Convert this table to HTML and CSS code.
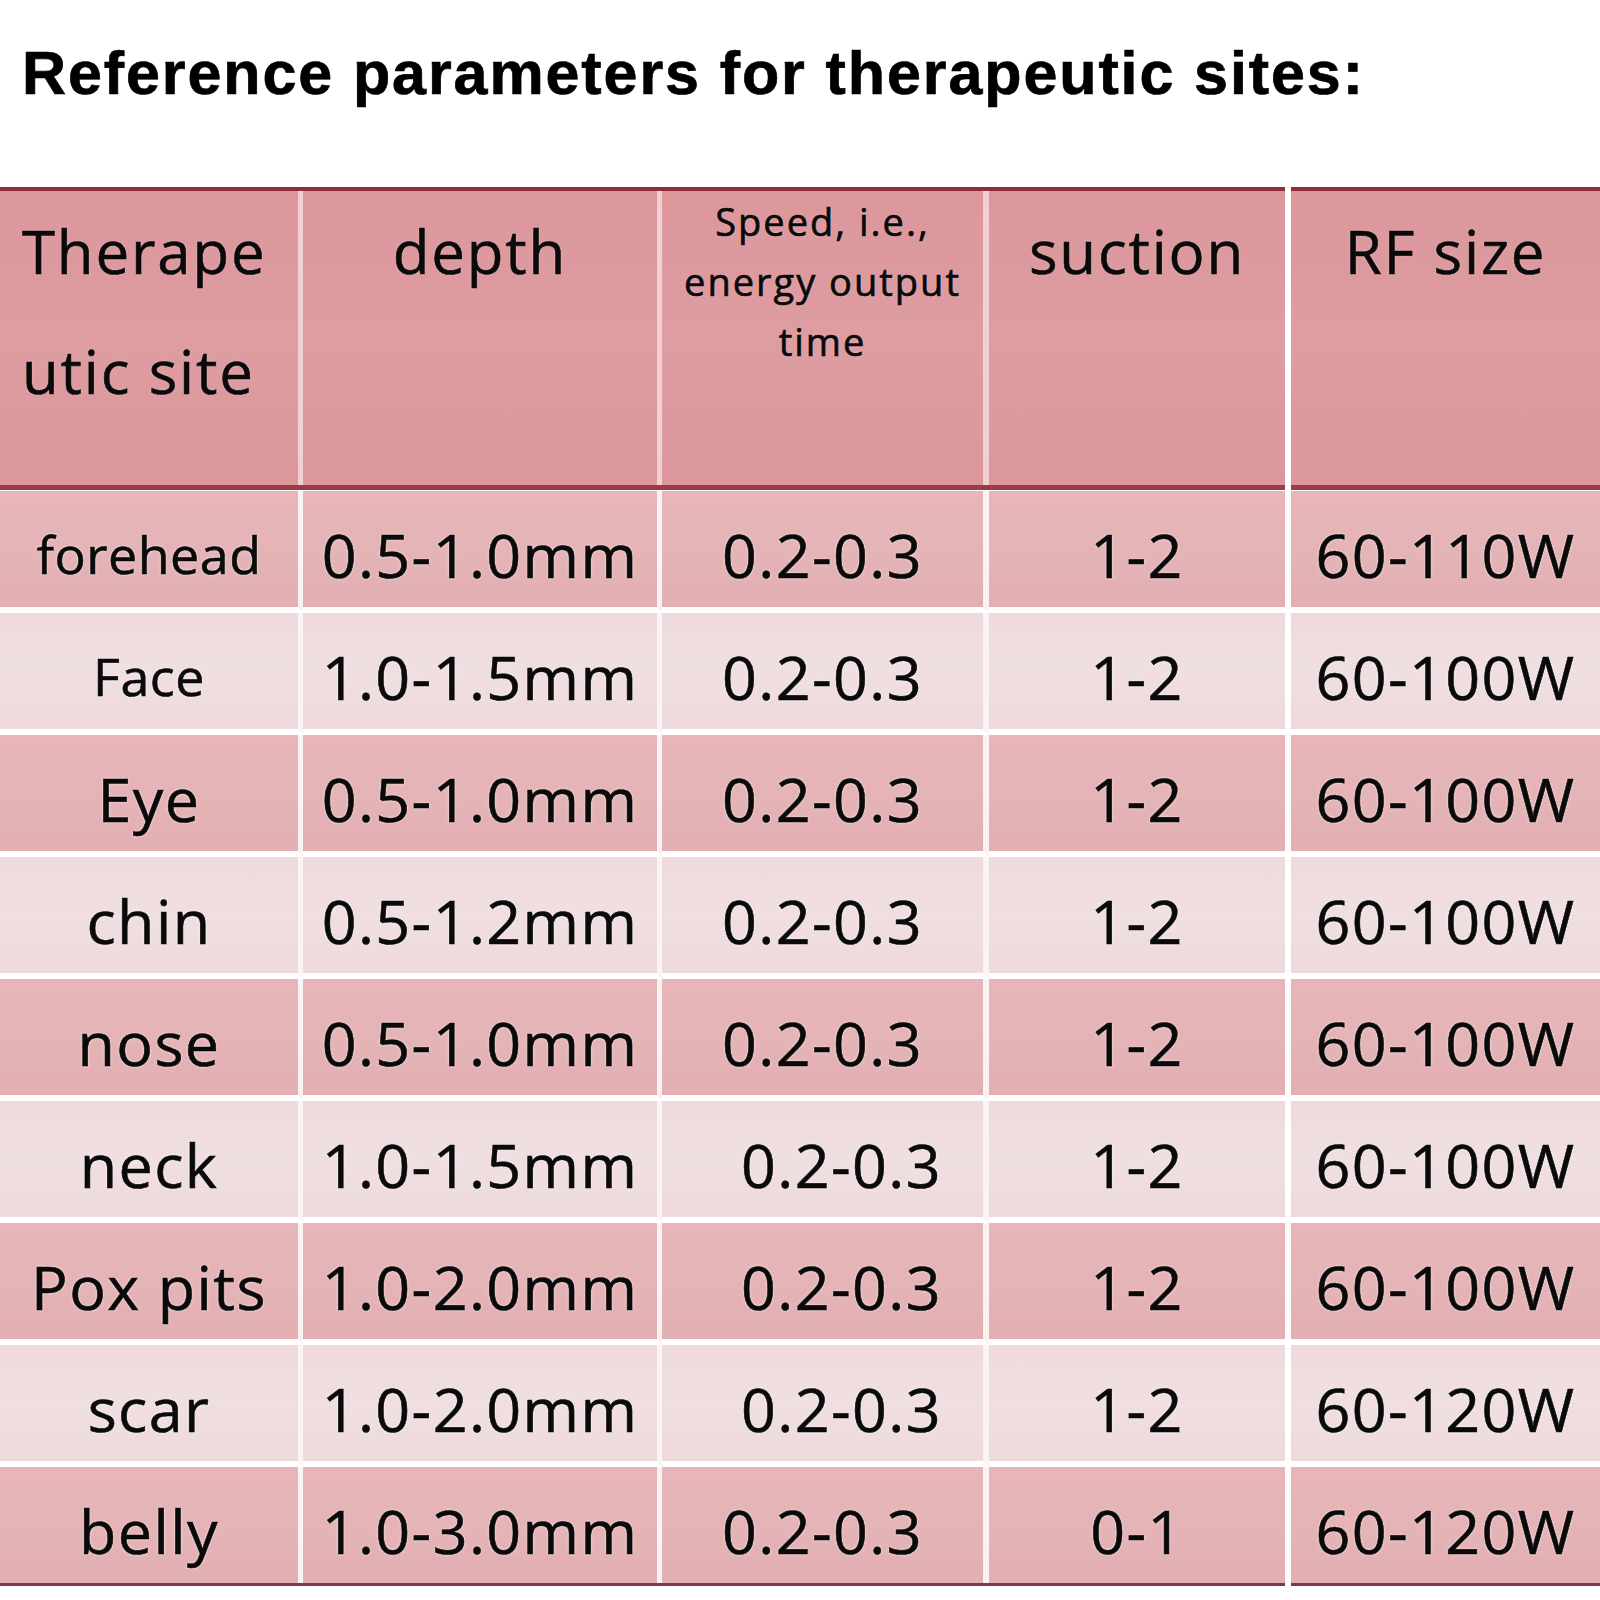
FILE: index.html
```html
<!DOCTYPE html>
<html lang="en">
<head>
<meta charset="utf-8">
<title>Reference parameters for therapeutic sites</title>
<link rel="stylesheet" href="styles.css">
</head>
<body>
<h1 class="title">Reference parameters for therapeutic sites:</h1>
<div class="grid">
  <div class="rule rule-a"></div>
  <div class="rule rule-b"></div>

  <div class="hcell c1 left">Therape<br>utic site</div>
  <div class="hcell c2">depth</div>
  <div class="hcell c3 small">Speed, i.e.,<br>energy output<br>time</div>
  <div class="hcell c4">suction</div>
  <div class="hcell c5">RF size</div>

  <div class="rule rule-a thick"></div>
  <div class="rule rule-b thick"></div>

  <div class="cell c1 dark name-sm">forehead</div>
  <div class="cell c2 dark">0.5-1.0mm</div>
  <div class="cell c3 dark">0.2-0.3</div>
  <div class="cell c4 dark">1-2</div>
  <div class="cell c5 dark">60-110W</div>

  <div class="cell c1 light name-sm">Face</div>
  <div class="cell c2 light">1.0-1.5mm</div>
  <div class="cell c3 light">0.2-0.3</div>
  <div class="cell c4 light">1-2</div>
  <div class="cell c5 light">60-100W</div>

  <div class="cell c1 dark">Eye</div>
  <div class="cell c2 dark">0.5-1.0mm</div>
  <div class="cell c3 dark">0.2-0.3</div>
  <div class="cell c4 dark">1-2</div>
  <div class="cell c5 dark">60-100W</div>

  <div class="cell c1 light">chin</div>
  <div class="cell c2 light">0.5-1.2mm</div>
  <div class="cell c3 light">0.2-0.3</div>
  <div class="cell c4 light">1-2</div>
  <div class="cell c5 light">60-100W</div>

  <div class="cell c1 dark">nose</div>
  <div class="cell c2 dark">0.5-1.0mm</div>
  <div class="cell c3 dark">0.2-0.3</div>
  <div class="cell c4 dark">1-2</div>
  <div class="cell c5 dark">60-100W</div>

  <div class="cell c1 light">neck</div>
  <div class="cell c2 light">1.0-1.5mm</div>
  <div class="cell c3 light shift">0.2-0.3</div>
  <div class="cell c4 light">1-2</div>
  <div class="cell c5 light">60-100W</div>

  <div class="cell c1 dark">Pox pits</div>
  <div class="cell c2 dark">1.0-2.0mm</div>
  <div class="cell c3 dark shift">0.2-0.3</div>
  <div class="cell c4 dark">1-2</div>
  <div class="cell c5 dark">60-100W</div>

  <div class="cell c1 light">scar</div>
  <div class="cell c2 light">1.0-2.0mm</div>
  <div class="cell c3 light shift">0.2-0.3</div>
  <div class="cell c4 light">1-2</div>
  <div class="cell c5 light">60-120W</div>

  <div class="cell c1 dark last">belly</div>
  <div class="cell c2 dark last">1.0-3.0mm</div>
  <div class="cell c3 dark last">0.2-0.3</div>
  <div class="cell c4 dark last">0-1</div>
  <div class="cell c5 dark last">60-120W</div>

  <div class="rule rule-a bottom"></div>
  <div class="rule rule-b bottom"></div>
</div>
</body>
</html>
```
FILE: styles.css
```css
html, body {
  margin: 0;
  padding: 0;
  background: #ffffff;
}

body {
  width: 1600px;
  font-family: "Open Sans", "Noto Sans", sans-serif;
  color: #0a0a0a;
}

.title {
  margin: 0;
  padding: 38px 0 0 22px;
  height: 187px;
  box-sizing: border-box;
  font-family: "Liberation Sans", Arial, sans-serif;
  font-weight: bold;
  font-size: 61px;
  line-height: 70px;
  letter-spacing: 1.9px;
  color: #000000;
  -webkit-text-stroke: 0.7px #000000;
  white-space: nowrap;
}

.grid {
  display: grid;
  grid-template-columns: 303px 359px 327px 302px 309px;
  grid-auto-rows: auto;
}

.rule {
  height: 4px;
  background: #8e2f3c;
}

.rule-a {
  grid-column: 1 / 5;
  margin-right: 6px;
}

.rule-b {
  grid-column: 5 / 6;
}

.rule.thick {
  height: 5px;
  background: #9c3a46;
  margin-bottom: 1px;
}

.rule.bottom {
  height: 3px;
  background: #7e3a44;
}

.hcell {
  height: 294px;
  box-sizing: border-box;
  background: linear-gradient(180deg, #dc979b 0%, #de9da1 50%, #db979b 100%);
  font-size: 60px;
  line-height: 120px;
  letter-spacing: 1.8px;
  text-align: center;
  -webkit-text-stroke: 0.6px #0a0a0a;
  text-shadow: 0 0 2px rgba(255, 235, 235, 0.6);
}

.hcell.left {
  text-align: left;
  padding-left: 22px;
}

.hcell.small {
  font-size: 38px;
  line-height: 60px;
  letter-spacing: 2px;
  -webkit-text-stroke: 0.7px #0a0a0a;
}

.hcell.c1,
.hcell.c2 {
  border-right: 5px solid #f1cfd2;
}

.hcell.c3 {
  border-right: 6px solid #f1cfd2;
}

.hcell.c4 {
  border-right: 6px solid #ffffff;
}

.cell {
  height: 122px;
  box-sizing: border-box;
  display: flex;
  align-items: center;
  justify-content: center;
  padding-top: 10px;
  font-size: 61px;
  line-height: 1;
  letter-spacing: 1.4px;
  border-bottom: 6px solid #ffffff;
  -webkit-text-stroke: 0.6px #0a0a0a;
  text-shadow: 0 0 3px rgba(255, 255, 255, 0.85);
  white-space: nowrap;
}

.cell.last {
  border-bottom: 0;
  height: 116px;
}

.cell.dark {
  background: linear-gradient(180deg, #e8b6ba 0%, #e4b3b6 60%, #e2afb3 100%);
}

.cell.light {
  background: linear-gradient(180deg, #eedadd 0%, #f0dfe1 50%, #eed9dc 100%);
}

.cell.c1,
.cell.c2,
.cell.c3 {
  border-right: 5px solid #fbf2f3;
}

.cell.c3 {
  border-right-width: 6px;
}

.cell.c4 {
  border-right: 6px solid #ffffff;
}

.cell.name-sm {
  font-size: 52px;
  letter-spacing: 0.5px;
}

.cell.shift {
  padding-left: 38px;
}
```
